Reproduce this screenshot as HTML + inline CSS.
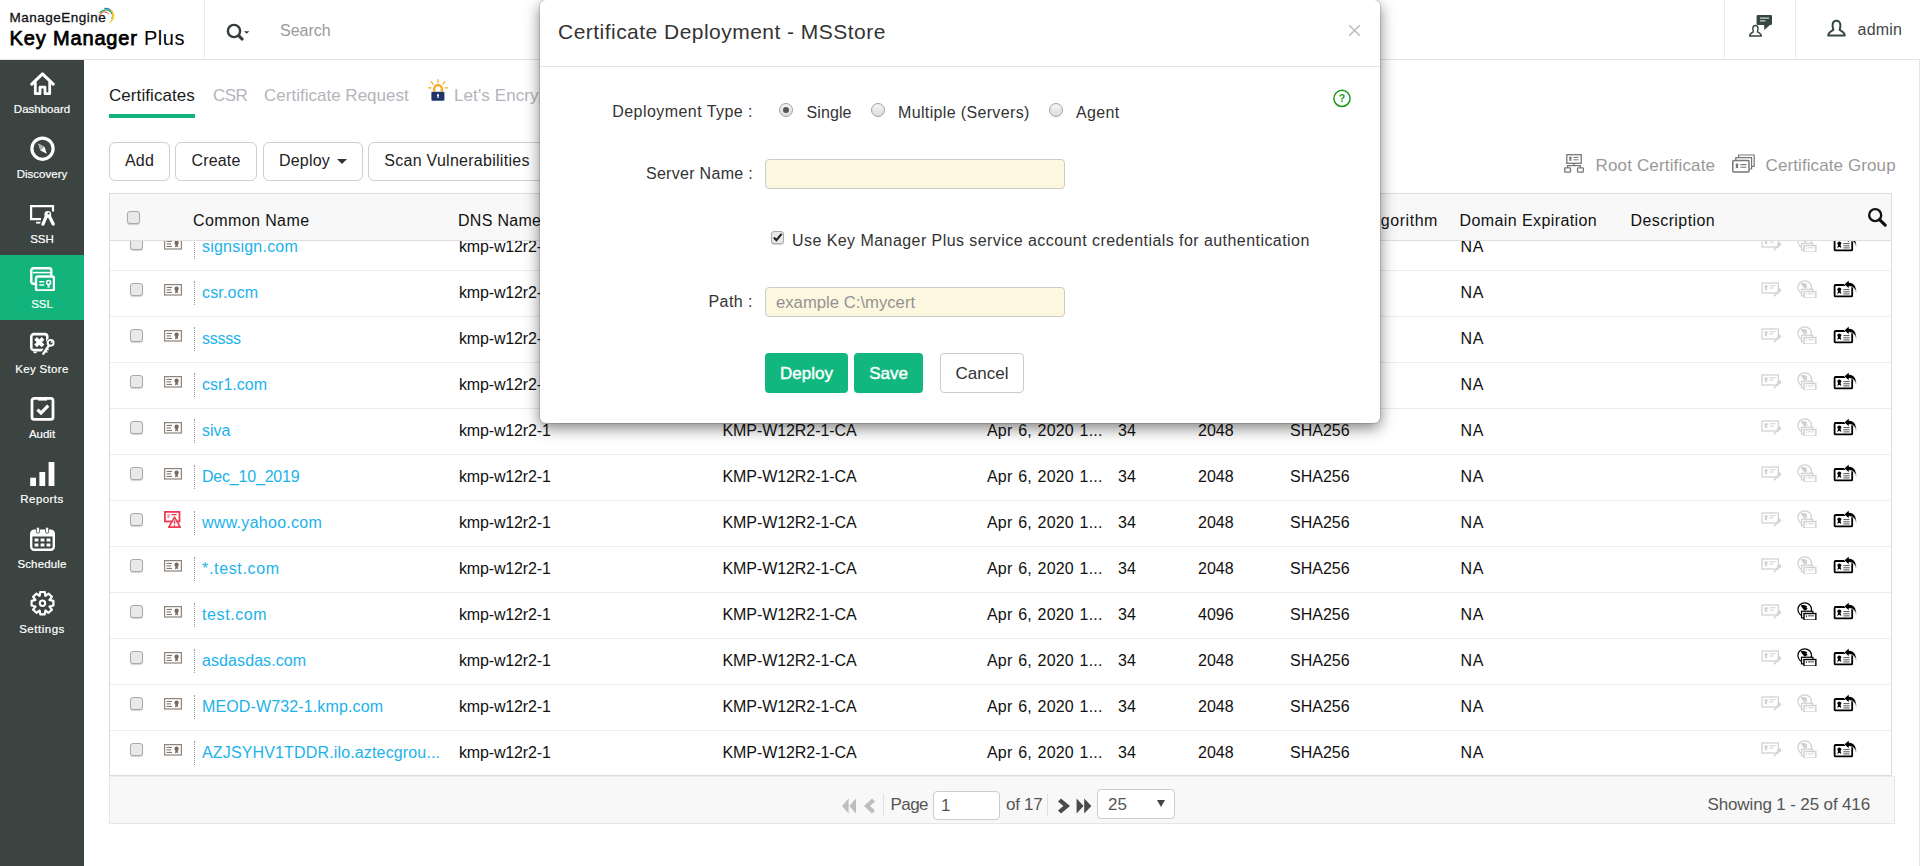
<!DOCTYPE html>
<html><head><meta charset="utf-8"><title>Key Manager Plus</title>
<style>
*{box-sizing:border-box;margin:0;padding:0}
html,body{width:1920px;height:866px;overflow:hidden;background:#fff;font-family:"Liberation Sans",Arial,sans-serif;font-size:16px;color:#111}
.abs{position:absolute;white-space:nowrap}
#hdr{position:absolute;left:0;top:0;width:1920px;height:60px;background:#fff;border-bottom:1px solid #e4e4e4}
.vdiv{position:absolute;top:0;width:1px;height:59px;background:#ececec}
#side{position:absolute;left:0;top:60px;width:84px;height:806px;background:#3b4441}
.nav{position:absolute;left:0;width:84px;height:65px;color:#fff;font-size:11.5px;text-align:center}
.nav span{position:absolute;left:0;width:84px;top:42px;line-height:15px;letter-spacing:0;-webkit-text-stroke:.2px #fff}
.nav svg{position:absolute;left:30px;top:11px;width:25px;height:25px}
.nav.on{background:#13b47c}
.tab{position:absolute;top:86px;font-size:17px;line-height:20px;color:#b4b4bb;white-space:nowrap}
.btn{position:absolute;top:142px;height:39px;border:1px solid #cfcfcf;border-radius:6px;background:#fff;font-size:16px;line-height:35px;text-align:center;color:#222;letter-spacing:.2px;white-space:nowrap}
#tbl{position:absolute;left:109px;top:193px;width:1783px;height:583px;border:1px solid #dcdcdc;background:#fff;overflow:hidden}
#th{position:absolute;left:0;top:0;width:1781px;height:47px;background:#f8f8f8;border-bottom:1px solid #dedede;z-index:2}
.h{position:absolute;top:17px;font-size:16px;line-height:20px;color:#111;white-space:nowrap;letter-spacing:.4px}
.row{position:absolute;left:0;width:1781px;height:46px;border-bottom:1px solid #ececec;background:#fff}
.row .c{position:absolute;top:12px;line-height:20px;font-size:16px;white-space:nowrap;color:#111}
.row a{position:absolute;left:92px;top:12px;line-height:20px;font-size:16px;color:#1cb2ea;white-space:nowrap;text-decoration:none;letter-spacing:.25px}
.cb{position:absolute;width:13px;height:13px;border:1px solid #a9a9a9;border-radius:3px;background:#e9e9e9;box-shadow:0 1px 1px rgba(0,0,0,.18)}
.dot{position:absolute;left:84px;top:10px;width:0;height:24px;border-left:1px dotted #999}
#ftr{position:absolute;left:109px;top:776px;width:1786px;height:48px;background:#f8f8f8;border:1px solid #e6e6e6;border-top:1px solid #ebebeb}
#modal{position:absolute;left:540px;top:0;width:840px;height:423px;background:#fff;border-radius:6px;box-shadow:0 5px 15px rgba(0,0,0,.5),0 0 0 1px rgba(0,0,0,.12);z-index:10}
#mhdr{position:absolute;left:0;top:0;width:840px;height:67px;border-bottom:1px solid #e5e5e5}
.lbl{position:absolute;font-size:16px;line-height:20px;color:#333;text-align:right;width:200px;white-space:nowrap;letter-spacing:.45px}
.inp{position:absolute;left:225px;width:300px;height:30px;border:1px solid #ccc;border-radius:4px;background:#fdf7e0}
.radio{position:absolute;width:14px;height:14px;border-radius:50%;border:1px solid #a3a3a3;background:linear-gradient(#f4f4f4,#dcdcdc)}
.mb{position:absolute;top:353px;height:40px;border-radius:4px;font-size:17px;line-height:42px;text-align:center;color:#fff;background:#12b77f;font-weight:normal;-webkit-text-stroke:.4px #fff}

.ci{position:absolute;left:54px;top:13px;width:18px;height:12px}
.ri{position:absolute;left:54px;top:10px;width:17px;height:17px}
.a1{position:absolute;left:1651px;top:11px;width:21px;height:15px}
.a2{position:absolute;left:1687px;top:8.6px;width:19.8px;height:18.9px}
.a3{position:absolute;left:1722.5px;top:8.6px;width:24px;height:18px}

.opt{font-size:16px;line-height:20px;color:#333;letter-spacing:.35px}
.radio b{position:absolute;left:3px;top:3px;width:6px;height:6px;border-radius:50%;background:#555}
</style></head><body>
<div id="hdr">
 <div class="vdiv" style="left:204px"></div>
 <div class="vdiv" style="left:1724px"></div>
 <div class="vdiv" style="left:1795px"></div>
 <div class="abs" style="left:9.5px;top:9px;font-size:13.5px;line-height:18px;color:#111;letter-spacing:.5px;-webkit-text-stroke:.3px #111">ManageEngine</div>
 <svg style="position:absolute;left:96.5px;top:6px;width:20px;height:20px" viewBox="0 0 20 20"><path d="M2.2 9.4C4 5.6 8.4 4.6 11.4 7.4" fill="none" stroke="#e5343d" stroke-width="1" stroke-linecap="round"/><path d="M3 6.6C6.4 2.6 12.4 3 14.8 7.8" fill="none" stroke="#2da84a" stroke-width="1.2" stroke-linecap="round"/><path d="M8 2.6C13.6 2 17 7 15.2 12.4" fill="none" stroke="#2f7fd0" stroke-width="1.5" stroke-linecap="round"/><path d="M12 2.4C18.6 4.6 19.6 14.6 11.4 17.4C16 13.6 16.6 7 12 2.4Z" fill="#f4c91f"/></svg>
 <div class="abs" style="left:9.5px;top:25px;font-size:20px;line-height:26px;color:#000;letter-spacing:.55px"><b style="font-weight:normal;-webkit-text-stroke:.75px #000;letter-spacing:.85px">Key Manager</b> Plus</div>
 <svg style="position:absolute;left:225px;top:22px;width:26px;height:20px" viewBox="0 0 26 20"><circle cx="9" cy="9" r="6.1" fill="none" stroke="#333c3a" stroke-width="2.4"/><path d="M13.4 13.4L18 18" stroke="#333c3a" stroke-width="3"/><path d="M19 9.2H24.4L21.7 11.8Z" fill="#333c3a"/></svg>
 <div class="abs" style="left:280px;top:21px;font-size:16px;line-height:20px;color:#9a9a9a">Search</div>
 <svg style="position:absolute;left:1748px;top:14px;width:26px;height:25px" viewBox="0 0 26 25"><rect x="8.6" y="1" width="15.4" height="10" rx="1.2" fill="#364643"/><path d="M16 10.6H22.4L16.4 16Z" fill="#364643"/><path d="M12 4.2H21M12 6.8H17.4" stroke="#cfd4d3" stroke-width="1.2"/><path d="M4.8 14.6C4.8 10.4 10 10.4 10 14.6C10 16.2 9.6 17.2 9.5 17.8C11.2 18.6 13.2 19.6 13.4 22H1.6C1.8 19.6 3.6 18.6 5.3 17.8C5.2 17.2 4.8 16.2 4.8 14.6Z" fill="#fff" stroke="#364643" stroke-width="1.4" stroke-linejoin="round"/></svg>
 <svg style="position:absolute;left:1826px;top:19px;width:21px;height:19px" viewBox="0 0 21 19"><path d="M6.6 6.2C6.6 0.2 14.4 0.2 14.4 6.2C14.4 8.6 13.8 10 13.6 10.8C16 12 18.6 13.4 18.8 16.4H2.2C2.4 13.4 5 12 7.4 10.8C7.2 10 6.6 8.6 6.6 6.2Z" fill="none" stroke="#364643" stroke-width="2" stroke-linejoin="round"/></svg>
 <div class="abs" style="left:1857.6px;top:20.3px;font-size:16px;line-height:20px;color:#3f4846;letter-spacing:.2px">admin</div>
</div>
<div style="position:absolute;left:1919px;top:59px;width:1px;height:807px;background:#e4e4e4"></div>
<div id="side">
 <div class="nav" style="top:0"><svg viewBox="0 0 25 25"><path d="M1.8 13.2 L12.5 2.8 L23.2 13.2" fill="none" stroke="#fff" stroke-width="3" stroke-linecap="round" stroke-linejoin="round"/><path d="M5.3 11.5V22.7H10V16.2H15V22.7H19.7V11.5" fill="none" stroke="#fff" stroke-width="2.8" stroke-linejoin="round" stroke-linecap="round"/></svg><span>Dashboard</span></div>
 <div class="nav" style="top:65px"><svg viewBox="0 0 25 25"><circle cx="12.5" cy="12.7" r="10.6" fill="none" stroke="#fff" stroke-width="3.2"/><path d="M8.2 7.6 L14.6 11 L16.8 17.8 L10.4 14.4Z" fill="#fff"/><path d="M8.2 7.6 L14.6 11 L10.4 14.4Z" fill="#aab0ae"/></svg><span>Discovery</span></div>
 <div class="nav" style="top:130px"><svg viewBox="0 0 25 25"><path d="M23 10.6V5.1H1.1V18.2H11" fill="none" stroke="#fff" stroke-width="2.2" stroke-linejoin="miter"/><path d="M6 21.7H11.4" stroke="#fff" stroke-width="1.8"/><path d="M16.2 15.4L12.8 23.4M19.4 15L23.4 23.2" stroke="#3b4441" stroke-width="5.6" stroke-linecap="round"/><circle cx="17.8" cy="13.4" r="4.8" fill="#3b4441"/><path d="M16.4 15.2L13 23.2M19.2 15L23.2 23" stroke="#fff" stroke-width="3.2" stroke-linecap="round"/><circle cx="17.8" cy="13.4" r="2.6" fill="#fff" stroke="#fff" stroke-width="1.6"/><circle cx="18.6" cy="12.6" r="1" fill="#3b4441"/></svg><span>SSH</span></div>
 <div class="nav on" style="top:195px"><svg viewBox="0 0 25 25"><rect x="1.3" y="2.3" width="20" height="15.5" rx="2" fill="none" stroke="#fff" stroke-width="2.4"/><path d="M3 6.6H20" stroke="#fff" stroke-width="1.6"/><rect x="6" y="10.5" width="18" height="14" rx="2" fill="#13b47c" stroke="#fff" stroke-width="2.4"/><path d="M9.3 15.7H14.2M9.3 19H14.2" stroke="#fff" stroke-width="1.5"/><circle cx="18.6" cy="16.4" r="2" fill="none" stroke="#fff" stroke-width="1.5"/><path d="M17.6 18.5V22.3L18.6 21.3L19.6 22.3V18.5Z" fill="#fff"/></svg><span>SSL</span></div>
 <div class="nav" style="top:260px"><svg viewBox="0 0 25 25"><rect x="1.3" y="3.1" width="16" height="16" rx="2.6" fill="none" stroke="#fff" stroke-width="2.6"/><path d="M5.6 7.4L13 14.8M13 7.4L5.6 14.8" stroke="#fff" stroke-width="3.8"/><path d="M3.6 21.4H6.6" stroke="#fff" stroke-width="1.6"/><path d="M19.2 14L13.4 22.6" stroke="#3b4441" stroke-width="5.2" stroke-linecap="round"/><circle cx="20.7" cy="11.8" r="4.6" fill="#3b4441"/><path d="M19 14.4L13.4 22.6" stroke="#fff" stroke-width="2.5" stroke-linecap="round"/><path d="M15.2 19.8L17.4 21.4M16.6 17.6L18.6 19" stroke="#fff" stroke-width="1.5"/><circle cx="20.7" cy="11.8" r="2.9" fill="#3b4441" stroke="#fff" stroke-width="1.9"/><circle cx="21.6" cy="10.9" r=".9" fill="#fff"/></svg><span style="letter-spacing:.32px">Key Store</span></div>
 <div class="nav" style="top:325px"><svg viewBox="0 0 25 25"><rect x="2" y="2.4" width="21" height="21" rx="2.2" fill="none" stroke="#fff" stroke-width="2.8"/><path d="M8 2.4H17V4.6H8Z" fill="#fff"/><path d="M7.4 13.6L11 17L18.2 9.6" fill="none" stroke="#fff" stroke-width="3.2"/></svg><span>Audit</span></div>
 <div class="nav" style="top:390px"><svg viewBox="0 0 25 25"><rect x="0.2" y="16.7" width="5.8" height="8.3" fill="#fff"/><rect x="9.4" y="11" width="5.8" height="14" fill="#fff"/><rect x="18.6" y="1" width="5.8" height="24" fill="#fff"/></svg><span style="letter-spacing:.45px">Reports</span></div>
 <div class="nav" style="top:455px"><svg viewBox="0 0 25 25"><rect x="1.2" y="4.8" width="22.6" height="19" rx="3" fill="none" stroke="#fff" stroke-width="2.4"/><path d="M1.2 8.5Q1.2 4.8 5 4.8H20Q23.8 4.8 23.8 8.5V10.5H1.2Z" fill="#fff"/><rect x="6.4" y="1.2" width="3" height="6" rx="1.2" fill="#fff" stroke="#3b4441" stroke-width=".8"/><rect x="15.6" y="1.2" width="3" height="6" rx="1.2" fill="#fff" stroke="#3b4441" stroke-width=".8"/><path d="M4.6 12.6H8.4V15.6H4.6ZM10.6 12.6H14.4V15.6H10.6ZM16.6 12.6H20.4V15.6H16.6ZM4.6 17.6H8.4V20.6H4.6ZM10.6 17.6H14.4V20.6H10.6ZM16.6 17.6H20.4V20.6H16.6Z" fill="#fff"/></svg><span style="letter-spacing:.16px">Schedule</span></div>
 <div class="nav" style="top:520px"><svg viewBox="0 0 25 25"><g transform="translate(12.5 12.2)"><path d="M-2.2 -11.2H2.2L2.9 -7.3L6 -9.6L9.4 -6.4L7 -3.3L10.9 -2.3V2.3L7 3.3L9.4 6.4L6 9.6L2.9 7.3L2.2 11.2H-2.2L-2.9 7.3L-6 9.6L-9.4 6.4L-7 3.3L-10.9 2.3V-2.3L-7 -3.3L-9.4 -6.4L-6 -9.6L-2.9 -7.3Z" fill="none" stroke="#fff" stroke-width="2.2" stroke-linejoin="round"/><circle r="2.7" fill="none" stroke="#fff" stroke-width="2"/></g></svg><span style="letter-spacing:.52px">Settings</span></div>
</div>

<div id="main">
<div class="tab" style="left:109px;color:#1a1a1a;letter-spacing:.07px">Certificates</div>
<div style="position:absolute;left:109px;top:114px;width:86px;height:4px;background:#13b47c"></div>
<div class="tab" style="left:213px;letter-spacing:-.5px">CSR</div>
<div class="tab" style="left:264px;letter-spacing:.01px">Certificate Request</div>
<svg style="position:absolute;left:428px;top:79px;width:20px;height:24px" viewBox="0 0 20 24"><rect x="3.4" y="12.8" width="13" height="9" rx="1" fill="#1f3468"/><path d="M6.2 12.8V10A3.8 3.8 0 0 1 13.8 10V12.8" fill="none" stroke="#f6a623" stroke-width="2.3"/><path d="M10 0.6V3.8M3.2 2.8L5 5.2M16.8 2.8L15 5.2M0.4 8.8H3M17 8.8H19.6" stroke="#f6a623" stroke-width="1.2" stroke-linecap="round"/><circle cx="10" cy="16.2" r="1.1" fill="#fff"/><rect x="9.4" y="16.4" width="1.2" height="2.6" fill="#fff"/></svg>
<div class="tab" style="left:454px;letter-spacing:.1px">Let's Encrypt</div>
<div class="btn" style="left:109px;width:61px">Add</div>
<div class="btn" style="left:175px;width:82px">Create</div>
<div class="btn" style="left:263px;width:100px;text-align:left;padding-left:15px">Deploy<i style="position:absolute;left:73px;top:16px;border:5px solid transparent;border-top:5px solid #333;border-bottom:none"></i></div>
<div class="btn" style="left:368px;width:178px;letter-spacing:.27px">Scan Vulnerabilities</div>
<svg style="position:absolute;left:1564px;top:154px;width:20px;height:19px" viewBox="0 0 20 19"><rect x="2.8" y=".7" width="14.4" height="8.6" fill="none" stroke="#777" stroke-width="1.3"/><circle cx="6.4" cy="3.8" r="1.3" fill="#777"/><path d="M5.6 4.6L5.2 7L6.4 6.4L7.6 7L7.2 4.6Z" fill="#777"/><path d="M9.4 3.4H14.6M9.4 5.8H14.6" stroke="#777" stroke-width="1"/><path d="M10 9.3V11.6M3.6 14V11.6H16.4V14" fill="none" stroke="#777" stroke-width="1.3"/><rect x=".7" y="13.8" width="5.8" height="4.4" rx=".8" fill="none" stroke="#777" stroke-width="1.3"/><rect x="13.5" y="13.8" width="5.8" height="4.4" rx=".8" fill="none" stroke="#777" stroke-width="1.3"/></svg>
<div class="abs" style="left:1595.5px;top:156.3px;font-size:17px;line-height:20px;color:#999;letter-spacing:.16px">Root Certificate</div>
<svg style="position:absolute;left:1732px;top:154px;width:23px;height:19px" viewBox="0 0 23 19"><path d="M6.6 3.4V1H22.2V12.4H20" fill="none" stroke="#777" stroke-width="1.2"/><path d="M3.8 6V3.6H19.6V15H17.4" fill="none" stroke="#777" stroke-width="1.2"/><rect x=".8" y="6.4" width="16.2" height="11.6" rx="1" fill="#fff" stroke="#777" stroke-width="1.5"/><circle cx="5" cy="10.8" r="1.4" fill="#777"/><path d="M4.1 11.8L3.6 14.6L5 13.8L6.4 14.6L5.9 11.8Z" fill="#777"/><path d="M8.4 10.6H14.4M8.4 13.2H14.4" stroke="#777" stroke-width="1.1"/></svg>
<div class="abs" style="left:1765.5px;top:156.3px;font-size:17px;line-height:20px;color:#999;letter-spacing:.1px">Certificate Group</div>
<div id="tbl">
<div class="row" style="top:31px"><i class="cb" style="left:20px;top:12px"></i><svg class="ci" viewBox="0 0 18 12"><rect x=".6" y=".6" width="16.8" height="10.4" fill="#fff" stroke="#8d8378" stroke-width="1.2"/><path d="M2.6 3.4H8M2.6 5.9H7M2.6 8.4H8" stroke="#6f6a66" stroke-width="1"/><circle cx="12.6" cy="4.7" r="2.2" fill="#7a6a5c"/><path d="M11.5 6.2L11 9.4L12.6 8.6L14.2 9.4L13.7 6.2Z" fill="#7a6a5c"/></svg><i class="dot"></i><a style="letter-spacing:0.22px">signsign.com</a><span class="c" style="left:349px;letter-spacing:-.15px">kmp-w12r2-1</span><span class="c" style="left:612.5px;letter-spacing:-.08px">KMP-W12R2-1-CA</span><span class="c" style="left:877px;letter-spacing:.2px;word-spacing:1px">Apr 6, 2020 1...</span><span class="c" style="left:1008px">34</span><span class="c" style="left:1088px">2048</span><span class="c" style="left:1180px">SHA256</span><span class="c" style="left:1350.5px;letter-spacing:.7px">NA</span><svg class="a1" viewBox="0 0 21 15"><rect x="1" y="1" width="16.4" height="10" fill="none" stroke="#d3d3d3" stroke-width="1.3"/><circle cx="5" cy="4.6" r="1.7" fill="#d3d3d3"/><path d="M4 5.8L3.6 8.6L5 7.8L6.4 8.6L6 5.8Z" fill="#d3d3d3"/><path d="M8.6 3.8H14.6M8.6 6H12.6" stroke="#d3d3d3" stroke-width="1.1"/><circle cx="18.2" cy="8.2" r="1.9" fill="#d3d3d3"/><path d="M17.4 9.2L13.4 13.8" stroke="#d3d3d3" stroke-width="1.6" stroke-linecap="round"/></svg><svg class="a2" viewBox="0 0 21 20"><circle cx="8.2" cy="8" r="7.2" fill="none" stroke="#d0d0d0" stroke-width="1.3"/><path d="M4 3.6C6 3 8.4 3.2 10.8 4.4L10 6.4L11.6 7.2L8.2 9.2L5.6 6.4Z" fill="#d0d0d0"/><rect x="4.8" y="9.8" width="12" height="7" fill="#fff" stroke="#d0d0d0" stroke-width="1.3"/><rect x="7.4" y="12.2" width="12.6" height="7" fill="#fff" stroke="#d0d0d0" stroke-width="1.5"/><path d="M9.4 15H10.6" stroke="#d0d0d0" stroke-width="1.3"/><path d="M11.6 14.6H18" stroke="#e4e4e4" stroke-width="1.6"/></svg><svg class="a3" viewBox="0 0 24 18"><rect x="1.6" y="5" width="17.6" height="11.4" rx="1" fill="#fff" stroke="#000" stroke-width="1.8"/><circle cx="6.3" cy="9.3" r="1.9" fill="#000"/><path d="M5.2 10.4L4.2 14L6.3 12.8L8.4 14L7.4 10.4Z" fill="#000"/><path d="M10.4 9.6H16.6M10.4 11.8H16.6M10.4 13.9H16.6" stroke="#555" stroke-width="1"/><path d="M11.2 4.3L16 0V2.4C20.8 2.4 23.8 6 23.4 13.4C22.2 8.8 20.4 6.4 16 6.4V8.8Z" fill="#000" stroke="#fff" stroke-width=".7"/></svg></div>
<div class="row" style="top:77px"><i class="cb" style="left:20px;top:12px"></i><svg class="ci" viewBox="0 0 18 12"><rect x=".6" y=".6" width="16.8" height="10.4" fill="#fff" stroke="#8d8378" stroke-width="1.2"/><path d="M2.6 3.4H8M2.6 5.9H7M2.6 8.4H8" stroke="#6f6a66" stroke-width="1"/><circle cx="12.6" cy="4.7" r="2.2" fill="#7a6a5c"/><path d="M11.5 6.2L11 9.4L12.6 8.6L14.2 9.4L13.7 6.2Z" fill="#7a6a5c"/></svg><i class="dot"></i><a style="letter-spacing:0.17px">csr.ocm</a><span class="c" style="left:349px;letter-spacing:-.15px">kmp-w12r2-1</span><span class="c" style="left:612.5px;letter-spacing:-.08px">KMP-W12R2-1-CA</span><span class="c" style="left:877px;letter-spacing:.2px;word-spacing:1px">Apr 6, 2020 1...</span><span class="c" style="left:1008px">34</span><span class="c" style="left:1088px">2048</span><span class="c" style="left:1180px">SHA256</span><span class="c" style="left:1350.5px;letter-spacing:.7px">NA</span><svg class="a1" viewBox="0 0 21 15"><rect x="1" y="1" width="16.4" height="10" fill="none" stroke="#d3d3d3" stroke-width="1.3"/><circle cx="5" cy="4.6" r="1.7" fill="#d3d3d3"/><path d="M4 5.8L3.6 8.6L5 7.8L6.4 8.6L6 5.8Z" fill="#d3d3d3"/><path d="M8.6 3.8H14.6M8.6 6H12.6" stroke="#d3d3d3" stroke-width="1.1"/><circle cx="18.2" cy="8.2" r="1.9" fill="#d3d3d3"/><path d="M17.4 9.2L13.4 13.8" stroke="#d3d3d3" stroke-width="1.6" stroke-linecap="round"/></svg><svg class="a2" viewBox="0 0 21 20"><circle cx="8.2" cy="8" r="7.2" fill="none" stroke="#d0d0d0" stroke-width="1.3"/><path d="M4 3.6C6 3 8.4 3.2 10.8 4.4L10 6.4L11.6 7.2L8.2 9.2L5.6 6.4Z" fill="#d0d0d0"/><rect x="4.8" y="9.8" width="12" height="7" fill="#fff" stroke="#d0d0d0" stroke-width="1.3"/><rect x="7.4" y="12.2" width="12.6" height="7" fill="#fff" stroke="#d0d0d0" stroke-width="1.5"/><path d="M9.4 15H10.6" stroke="#d0d0d0" stroke-width="1.3"/><path d="M11.6 14.6H18" stroke="#e4e4e4" stroke-width="1.6"/></svg><svg class="a3" viewBox="0 0 24 18"><rect x="1.6" y="5" width="17.6" height="11.4" rx="1" fill="#fff" stroke="#000" stroke-width="1.8"/><circle cx="6.3" cy="9.3" r="1.9" fill="#000"/><path d="M5.2 10.4L4.2 14L6.3 12.8L8.4 14L7.4 10.4Z" fill="#000"/><path d="M10.4 9.6H16.6M10.4 11.8H16.6M10.4 13.9H16.6" stroke="#555" stroke-width="1"/><path d="M11.2 4.3L16 0V2.4C20.8 2.4 23.8 6 23.4 13.4C22.2 8.8 20.4 6.4 16 6.4V8.8Z" fill="#000" stroke="#fff" stroke-width=".7"/></svg></div>
<div class="row" style="top:123px"><i class="cb" style="left:20px;top:12px"></i><svg class="ci" viewBox="0 0 18 12"><rect x=".6" y=".6" width="16.8" height="10.4" fill="#fff" stroke="#8d8378" stroke-width="1.2"/><path d="M2.6 3.4H8M2.6 5.9H7M2.6 8.4H8" stroke="#6f6a66" stroke-width="1"/><circle cx="12.6" cy="4.7" r="2.2" fill="#7a6a5c"/><path d="M11.5 6.2L11 9.4L12.6 8.6L14.2 9.4L13.7 6.2Z" fill="#7a6a5c"/></svg><i class="dot"></i><a style="letter-spacing:-0.24px">sssss</a><span class="c" style="left:349px;letter-spacing:-.15px">kmp-w12r2-1</span><span class="c" style="left:612.5px;letter-spacing:-.08px">KMP-W12R2-1-CA</span><span class="c" style="left:877px;letter-spacing:.2px;word-spacing:1px">Apr 6, 2020 1...</span><span class="c" style="left:1008px">34</span><span class="c" style="left:1088px">2048</span><span class="c" style="left:1180px">SHA256</span><span class="c" style="left:1350.5px;letter-spacing:.7px">NA</span><svg class="a1" viewBox="0 0 21 15"><rect x="1" y="1" width="16.4" height="10" fill="none" stroke="#d3d3d3" stroke-width="1.3"/><circle cx="5" cy="4.6" r="1.7" fill="#d3d3d3"/><path d="M4 5.8L3.6 8.6L5 7.8L6.4 8.6L6 5.8Z" fill="#d3d3d3"/><path d="M8.6 3.8H14.6M8.6 6H12.6" stroke="#d3d3d3" stroke-width="1.1"/><circle cx="18.2" cy="8.2" r="1.9" fill="#d3d3d3"/><path d="M17.4 9.2L13.4 13.8" stroke="#d3d3d3" stroke-width="1.6" stroke-linecap="round"/></svg><svg class="a2" viewBox="0 0 21 20"><circle cx="8.2" cy="8" r="7.2" fill="none" stroke="#d0d0d0" stroke-width="1.3"/><path d="M4 3.6C6 3 8.4 3.2 10.8 4.4L10 6.4L11.6 7.2L8.2 9.2L5.6 6.4Z" fill="#d0d0d0"/><rect x="4.8" y="9.8" width="12" height="7" fill="#fff" stroke="#d0d0d0" stroke-width="1.3"/><rect x="7.4" y="12.2" width="12.6" height="7" fill="#fff" stroke="#d0d0d0" stroke-width="1.5"/><path d="M9.4 15H10.6" stroke="#d0d0d0" stroke-width="1.3"/><path d="M11.6 14.6H18" stroke="#e4e4e4" stroke-width="1.6"/></svg><svg class="a3" viewBox="0 0 24 18"><rect x="1.6" y="5" width="17.6" height="11.4" rx="1" fill="#fff" stroke="#000" stroke-width="1.8"/><circle cx="6.3" cy="9.3" r="1.9" fill="#000"/><path d="M5.2 10.4L4.2 14L6.3 12.8L8.4 14L7.4 10.4Z" fill="#000"/><path d="M10.4 9.6H16.6M10.4 11.8H16.6M10.4 13.9H16.6" stroke="#555" stroke-width="1"/><path d="M11.2 4.3L16 0V2.4C20.8 2.4 23.8 6 23.4 13.4C22.2 8.8 20.4 6.4 16 6.4V8.8Z" fill="#000" stroke="#fff" stroke-width=".7"/></svg></div>
<div class="row" style="top:169px"><i class="cb" style="left:20px;top:12px"></i><svg class="ci" viewBox="0 0 18 12"><rect x=".6" y=".6" width="16.8" height="10.4" fill="#fff" stroke="#8d8378" stroke-width="1.2"/><path d="M2.6 3.4H8M2.6 5.9H7M2.6 8.4H8" stroke="#6f6a66" stroke-width="1"/><circle cx="12.6" cy="4.7" r="2.2" fill="#7a6a5c"/><path d="M11.5 6.2L11 9.4L12.6 8.6L14.2 9.4L13.7 6.2Z" fill="#7a6a5c"/></svg><i class="dot"></i><a style="letter-spacing:0.02px">csr1.com</a><span class="c" style="left:349px;letter-spacing:-.15px">kmp-w12r2-1</span><span class="c" style="left:612.5px;letter-spacing:-.08px">KMP-W12R2-1-CA</span><span class="c" style="left:877px;letter-spacing:.2px;word-spacing:1px">Apr 6, 2020 1...</span><span class="c" style="left:1008px">34</span><span class="c" style="left:1088px">2048</span><span class="c" style="left:1180px">SHA256</span><span class="c" style="left:1350.5px;letter-spacing:.7px">NA</span><svg class="a1" viewBox="0 0 21 15"><rect x="1" y="1" width="16.4" height="10" fill="none" stroke="#d3d3d3" stroke-width="1.3"/><circle cx="5" cy="4.6" r="1.7" fill="#d3d3d3"/><path d="M4 5.8L3.6 8.6L5 7.8L6.4 8.6L6 5.8Z" fill="#d3d3d3"/><path d="M8.6 3.8H14.6M8.6 6H12.6" stroke="#d3d3d3" stroke-width="1.1"/><circle cx="18.2" cy="8.2" r="1.9" fill="#d3d3d3"/><path d="M17.4 9.2L13.4 13.8" stroke="#d3d3d3" stroke-width="1.6" stroke-linecap="round"/></svg><svg class="a2" viewBox="0 0 21 20"><circle cx="8.2" cy="8" r="7.2" fill="none" stroke="#d0d0d0" stroke-width="1.3"/><path d="M4 3.6C6 3 8.4 3.2 10.8 4.4L10 6.4L11.6 7.2L8.2 9.2L5.6 6.4Z" fill="#d0d0d0"/><rect x="4.8" y="9.8" width="12" height="7" fill="#fff" stroke="#d0d0d0" stroke-width="1.3"/><rect x="7.4" y="12.2" width="12.6" height="7" fill="#fff" stroke="#d0d0d0" stroke-width="1.5"/><path d="M9.4 15H10.6" stroke="#d0d0d0" stroke-width="1.3"/><path d="M11.6 14.6H18" stroke="#e4e4e4" stroke-width="1.6"/></svg><svg class="a3" viewBox="0 0 24 18"><rect x="1.6" y="5" width="17.6" height="11.4" rx="1" fill="#fff" stroke="#000" stroke-width="1.8"/><circle cx="6.3" cy="9.3" r="1.9" fill="#000"/><path d="M5.2 10.4L4.2 14L6.3 12.8L8.4 14L7.4 10.4Z" fill="#000"/><path d="M10.4 9.6H16.6M10.4 11.8H16.6M10.4 13.9H16.6" stroke="#555" stroke-width="1"/><path d="M11.2 4.3L16 0V2.4C20.8 2.4 23.8 6 23.4 13.4C22.2 8.8 20.4 6.4 16 6.4V8.8Z" fill="#000" stroke="#fff" stroke-width=".7"/></svg></div>
<div class="row" style="top:215px"><i class="cb" style="left:20px;top:12px"></i><svg class="ci" viewBox="0 0 18 12"><rect x=".6" y=".6" width="16.8" height="10.4" fill="#fff" stroke="#8d8378" stroke-width="1.2"/><path d="M2.6 3.4H8M2.6 5.9H7M2.6 8.4H8" stroke="#6f6a66" stroke-width="1"/><circle cx="12.6" cy="4.7" r="2.2" fill="#7a6a5c"/><path d="M11.5 6.2L11 9.4L12.6 8.6L14.2 9.4L13.7 6.2Z" fill="#7a6a5c"/></svg><i class="dot"></i><a style="letter-spacing:-0.04px">siva</a><span class="c" style="left:349px;letter-spacing:-.15px">kmp-w12r2-1</span><span class="c" style="left:612.5px;letter-spacing:-.08px">KMP-W12R2-1-CA</span><span class="c" style="left:877px;letter-spacing:.2px;word-spacing:1px">Apr 6, 2020 1...</span><span class="c" style="left:1008px">34</span><span class="c" style="left:1088px">2048</span><span class="c" style="left:1180px">SHA256</span><span class="c" style="left:1350.5px;letter-spacing:.7px">NA</span><svg class="a1" viewBox="0 0 21 15"><rect x="1" y="1" width="16.4" height="10" fill="none" stroke="#d3d3d3" stroke-width="1.3"/><circle cx="5" cy="4.6" r="1.7" fill="#d3d3d3"/><path d="M4 5.8L3.6 8.6L5 7.8L6.4 8.6L6 5.8Z" fill="#d3d3d3"/><path d="M8.6 3.8H14.6M8.6 6H12.6" stroke="#d3d3d3" stroke-width="1.1"/><circle cx="18.2" cy="8.2" r="1.9" fill="#d3d3d3"/><path d="M17.4 9.2L13.4 13.8" stroke="#d3d3d3" stroke-width="1.6" stroke-linecap="round"/></svg><svg class="a2" viewBox="0 0 21 20"><circle cx="8.2" cy="8" r="7.2" fill="none" stroke="#d0d0d0" stroke-width="1.3"/><path d="M4 3.6C6 3 8.4 3.2 10.8 4.4L10 6.4L11.6 7.2L8.2 9.2L5.6 6.4Z" fill="#d0d0d0"/><rect x="4.8" y="9.8" width="12" height="7" fill="#fff" stroke="#d0d0d0" stroke-width="1.3"/><rect x="7.4" y="12.2" width="12.6" height="7" fill="#fff" stroke="#d0d0d0" stroke-width="1.5"/><path d="M9.4 15H10.6" stroke="#d0d0d0" stroke-width="1.3"/><path d="M11.6 14.6H18" stroke="#e4e4e4" stroke-width="1.6"/></svg><svg class="a3" viewBox="0 0 24 18"><rect x="1.6" y="5" width="17.6" height="11.4" rx="1" fill="#fff" stroke="#000" stroke-width="1.8"/><circle cx="6.3" cy="9.3" r="1.9" fill="#000"/><path d="M5.2 10.4L4.2 14L6.3 12.8L8.4 14L7.4 10.4Z" fill="#000"/><path d="M10.4 9.6H16.6M10.4 11.8H16.6M10.4 13.9H16.6" stroke="#555" stroke-width="1"/><path d="M11.2 4.3L16 0V2.4C20.8 2.4 23.8 6 23.4 13.4C22.2 8.8 20.4 6.4 16 6.4V8.8Z" fill="#000" stroke="#fff" stroke-width=".7"/></svg></div>
<div class="row" style="top:261px"><i class="cb" style="left:20px;top:12px"></i><svg class="ci" viewBox="0 0 18 12"><rect x=".6" y=".6" width="16.8" height="10.4" fill="#fff" stroke="#8d8378" stroke-width="1.2"/><path d="M2.6 3.4H8M2.6 5.9H7M2.6 8.4H8" stroke="#6f6a66" stroke-width="1"/><circle cx="12.6" cy="4.7" r="2.2" fill="#7a6a5c"/><path d="M11.5 6.2L11 9.4L12.6 8.6L14.2 9.4L13.7 6.2Z" fill="#7a6a5c"/></svg><i class="dot"></i><a style="letter-spacing:-0.2px">Dec_10_2019</a><span class="c" style="left:349px;letter-spacing:-.15px">kmp-w12r2-1</span><span class="c" style="left:612.5px;letter-spacing:-.08px">KMP-W12R2-1-CA</span><span class="c" style="left:877px;letter-spacing:.2px;word-spacing:1px">Apr 6, 2020 1...</span><span class="c" style="left:1008px">34</span><span class="c" style="left:1088px">2048</span><span class="c" style="left:1180px">SHA256</span><span class="c" style="left:1350.5px;letter-spacing:.7px">NA</span><svg class="a1" viewBox="0 0 21 15"><rect x="1" y="1" width="16.4" height="10" fill="none" stroke="#d3d3d3" stroke-width="1.3"/><circle cx="5" cy="4.6" r="1.7" fill="#d3d3d3"/><path d="M4 5.8L3.6 8.6L5 7.8L6.4 8.6L6 5.8Z" fill="#d3d3d3"/><path d="M8.6 3.8H14.6M8.6 6H12.6" stroke="#d3d3d3" stroke-width="1.1"/><circle cx="18.2" cy="8.2" r="1.9" fill="#d3d3d3"/><path d="M17.4 9.2L13.4 13.8" stroke="#d3d3d3" stroke-width="1.6" stroke-linecap="round"/></svg><svg class="a2" viewBox="0 0 21 20"><circle cx="8.2" cy="8" r="7.2" fill="none" stroke="#d0d0d0" stroke-width="1.3"/><path d="M4 3.6C6 3 8.4 3.2 10.8 4.4L10 6.4L11.6 7.2L8.2 9.2L5.6 6.4Z" fill="#d0d0d0"/><rect x="4.8" y="9.8" width="12" height="7" fill="#fff" stroke="#d0d0d0" stroke-width="1.3"/><rect x="7.4" y="12.2" width="12.6" height="7" fill="#fff" stroke="#d0d0d0" stroke-width="1.5"/><path d="M9.4 15H10.6" stroke="#d0d0d0" stroke-width="1.3"/><path d="M11.6 14.6H18" stroke="#e4e4e4" stroke-width="1.6"/></svg><svg class="a3" viewBox="0 0 24 18"><rect x="1.6" y="5" width="17.6" height="11.4" rx="1" fill="#fff" stroke="#000" stroke-width="1.8"/><circle cx="6.3" cy="9.3" r="1.9" fill="#000"/><path d="M5.2 10.4L4.2 14L6.3 12.8L8.4 14L7.4 10.4Z" fill="#000"/><path d="M10.4 9.6H16.6M10.4 11.8H16.6M10.4 13.9H16.6" stroke="#555" stroke-width="1"/><path d="M11.2 4.3L16 0V2.4C20.8 2.4 23.8 6 23.4 13.4C22.2 8.8 20.4 6.4 16 6.4V8.8Z" fill="#000" stroke="#fff" stroke-width=".7"/></svg></div>
<div class="row" style="top:307px"><i class="cb" style="left:20px;top:12px"></i><svg class="ri" viewBox="0 0 17 17"><rect x=".9" y=".9" width="14.6" height="9.6" fill="none" stroke="#ee3a52" stroke-width="1.8"/><path d="M3.4 4H5.6M3.4 6H5.6M7.5 3.6H12.6" stroke="#ee3a52" stroke-width="1.1"/><path d="M10.5 6.2L16.2 16.2H4.8Z" fill="#fff" stroke="#ee3a52" stroke-width="1.7" stroke-linejoin="round"/><path d="M10.5 9.6V12.8M10.5 13.8V15" stroke="#ee3a52" stroke-width="1.5"/></svg><i class="dot"></i><a style="letter-spacing:0.28px">www.yahoo.com</a><span class="c" style="left:349px;letter-spacing:-.15px">kmp-w12r2-1</span><span class="c" style="left:612.5px;letter-spacing:-.08px">KMP-W12R2-1-CA</span><span class="c" style="left:877px;letter-spacing:.2px;word-spacing:1px">Apr 6, 2020 1...</span><span class="c" style="left:1008px">34</span><span class="c" style="left:1088px">2048</span><span class="c" style="left:1180px">SHA256</span><span class="c" style="left:1350.5px;letter-spacing:.7px">NA</span><svg class="a1" viewBox="0 0 21 15"><rect x="1" y="1" width="16.4" height="10" fill="none" stroke="#d3d3d3" stroke-width="1.3"/><circle cx="5" cy="4.6" r="1.7" fill="#d3d3d3"/><path d="M4 5.8L3.6 8.6L5 7.8L6.4 8.6L6 5.8Z" fill="#d3d3d3"/><path d="M8.6 3.8H14.6M8.6 6H12.6" stroke="#d3d3d3" stroke-width="1.1"/><circle cx="18.2" cy="8.2" r="1.9" fill="#d3d3d3"/><path d="M17.4 9.2L13.4 13.8" stroke="#d3d3d3" stroke-width="1.6" stroke-linecap="round"/></svg><svg class="a2" viewBox="0 0 21 20"><circle cx="8.2" cy="8" r="7.2" fill="none" stroke="#d0d0d0" stroke-width="1.3"/><path d="M4 3.6C6 3 8.4 3.2 10.8 4.4L10 6.4L11.6 7.2L8.2 9.2L5.6 6.4Z" fill="#d0d0d0"/><rect x="4.8" y="9.8" width="12" height="7" fill="#fff" stroke="#d0d0d0" stroke-width="1.3"/><rect x="7.4" y="12.2" width="12.6" height="7" fill="#fff" stroke="#d0d0d0" stroke-width="1.5"/><path d="M9.4 15H10.6" stroke="#d0d0d0" stroke-width="1.3"/><path d="M11.6 14.6H18" stroke="#e4e4e4" stroke-width="1.6"/></svg><svg class="a3" viewBox="0 0 24 18"><rect x="1.6" y="5" width="17.6" height="11.4" rx="1" fill="#fff" stroke="#000" stroke-width="1.8"/><circle cx="6.3" cy="9.3" r="1.9" fill="#000"/><path d="M5.2 10.4L4.2 14L6.3 12.8L8.4 14L7.4 10.4Z" fill="#000"/><path d="M10.4 9.6H16.6M10.4 11.8H16.6M10.4 13.9H16.6" stroke="#555" stroke-width="1"/><path d="M11.2 4.3L16 0V2.4C20.8 2.4 23.8 6 23.4 13.4C22.2 8.8 20.4 6.4 16 6.4V8.8Z" fill="#000" stroke="#fff" stroke-width=".7"/></svg></div>
<div class="row" style="top:353px"><i class="cb" style="left:20px;top:12px"></i><svg class="ci" viewBox="0 0 18 12"><rect x=".6" y=".6" width="16.8" height="10.4" fill="#fff" stroke="#8d8378" stroke-width="1.2"/><path d="M2.6 3.4H8M2.6 5.9H7M2.6 8.4H8" stroke="#6f6a66" stroke-width="1"/><circle cx="12.6" cy="4.7" r="2.2" fill="#7a6a5c"/><path d="M11.5 6.2L11 9.4L12.6 8.6L14.2 9.4L13.7 6.2Z" fill="#7a6a5c"/></svg><i class="dot"></i><a style="letter-spacing:0.67px">*.test.com</a><span class="c" style="left:349px;letter-spacing:-.15px">kmp-w12r2-1</span><span class="c" style="left:612.5px;letter-spacing:-.08px">KMP-W12R2-1-CA</span><span class="c" style="left:877px;letter-spacing:.2px;word-spacing:1px">Apr 6, 2020 1...</span><span class="c" style="left:1008px">34</span><span class="c" style="left:1088px">2048</span><span class="c" style="left:1180px">SHA256</span><span class="c" style="left:1350.5px;letter-spacing:.7px">NA</span><svg class="a1" viewBox="0 0 21 15"><rect x="1" y="1" width="16.4" height="10" fill="none" stroke="#d3d3d3" stroke-width="1.3"/><circle cx="5" cy="4.6" r="1.7" fill="#d3d3d3"/><path d="M4 5.8L3.6 8.6L5 7.8L6.4 8.6L6 5.8Z" fill="#d3d3d3"/><path d="M8.6 3.8H14.6M8.6 6H12.6" stroke="#d3d3d3" stroke-width="1.1"/><circle cx="18.2" cy="8.2" r="1.9" fill="#d3d3d3"/><path d="M17.4 9.2L13.4 13.8" stroke="#d3d3d3" stroke-width="1.6" stroke-linecap="round"/></svg><svg class="a2" viewBox="0 0 21 20"><circle cx="8.2" cy="8" r="7.2" fill="none" stroke="#d0d0d0" stroke-width="1.3"/><path d="M4 3.6C6 3 8.4 3.2 10.8 4.4L10 6.4L11.6 7.2L8.2 9.2L5.6 6.4Z" fill="#d0d0d0"/><rect x="4.8" y="9.8" width="12" height="7" fill="#fff" stroke="#d0d0d0" stroke-width="1.3"/><rect x="7.4" y="12.2" width="12.6" height="7" fill="#fff" stroke="#d0d0d0" stroke-width="1.5"/><path d="M9.4 15H10.6" stroke="#d0d0d0" stroke-width="1.3"/><path d="M11.6 14.6H18" stroke="#e4e4e4" stroke-width="1.6"/></svg><svg class="a3" viewBox="0 0 24 18"><rect x="1.6" y="5" width="17.6" height="11.4" rx="1" fill="#fff" stroke="#000" stroke-width="1.8"/><circle cx="6.3" cy="9.3" r="1.9" fill="#000"/><path d="M5.2 10.4L4.2 14L6.3 12.8L8.4 14L7.4 10.4Z" fill="#000"/><path d="M10.4 9.6H16.6M10.4 11.8H16.6M10.4 13.9H16.6" stroke="#555" stroke-width="1"/><path d="M11.2 4.3L16 0V2.4C20.8 2.4 23.8 6 23.4 13.4C22.2 8.8 20.4 6.4 16 6.4V8.8Z" fill="#000" stroke="#fff" stroke-width=".7"/></svg></div>
<div class="row" style="top:399px"><i class="cb" style="left:20px;top:12px"></i><svg class="ci" viewBox="0 0 18 12"><rect x=".6" y=".6" width="16.8" height="10.4" fill="#fff" stroke="#8d8378" stroke-width="1.2"/><path d="M2.6 3.4H8M2.6 5.9H7M2.6 8.4H8" stroke="#6f6a66" stroke-width="1"/><circle cx="12.6" cy="4.7" r="2.2" fill="#7a6a5c"/><path d="M11.5 6.2L11 9.4L12.6 8.6L14.2 9.4L13.7 6.2Z" fill="#7a6a5c"/></svg><i class="dot"></i><a style="letter-spacing:0.6px">test.com</a><span class="c" style="left:349px;letter-spacing:-.15px">kmp-w12r2-1</span><span class="c" style="left:612.5px;letter-spacing:-.08px">KMP-W12R2-1-CA</span><span class="c" style="left:877px;letter-spacing:.2px;word-spacing:1px">Apr 6, 2020 1...</span><span class="c" style="left:1008px">34</span><span class="c" style="left:1088px">4096</span><span class="c" style="left:1180px">SHA256</span><span class="c" style="left:1350.5px;letter-spacing:.7px">NA</span><svg class="a1" viewBox="0 0 21 15"><rect x="1" y="1" width="16.4" height="10" fill="none" stroke="#d3d3d3" stroke-width="1.3"/><circle cx="5" cy="4.6" r="1.7" fill="#d3d3d3"/><path d="M4 5.8L3.6 8.6L5 7.8L6.4 8.6L6 5.8Z" fill="#d3d3d3"/><path d="M8.6 3.8H14.6M8.6 6H12.6" stroke="#d3d3d3" stroke-width="1.1"/><circle cx="18.2" cy="8.2" r="1.9" fill="#d3d3d3"/><path d="M17.4 9.2L13.4 13.8" stroke="#d3d3d3" stroke-width="1.6" stroke-linecap="round"/></svg><svg class="a2" viewBox="0 0 21 20"><circle cx="8.2" cy="8" r="7.2" fill="none" stroke="#000" stroke-width="1.3"/><path d="M4 3.6C6 3 8.4 3.2 10.8 4.4L10 6.4L11.6 7.2L8.2 9.2L5.6 6.4Z" fill="#000"/><rect x="4.8" y="9.8" width="12" height="7" fill="#fff" stroke="#000" stroke-width="1.3"/><rect x="7.4" y="12.2" width="12.6" height="7" fill="#fff" stroke="#000" stroke-width="1.5"/><path d="M9.4 15H10.6" stroke="#000" stroke-width="1.3"/><path d="M11.6 14.6H18" stroke="#888" stroke-width="1.6"/></svg><svg class="a3" viewBox="0 0 24 18"><rect x="1.6" y="5" width="17.6" height="11.4" rx="1" fill="#fff" stroke="#000" stroke-width="1.8"/><circle cx="6.3" cy="9.3" r="1.9" fill="#000"/><path d="M5.2 10.4L4.2 14L6.3 12.8L8.4 14L7.4 10.4Z" fill="#000"/><path d="M10.4 9.6H16.6M10.4 11.8H16.6M10.4 13.9H16.6" stroke="#555" stroke-width="1"/><path d="M11.2 4.3L16 0V2.4C20.8 2.4 23.8 6 23.4 13.4C22.2 8.8 20.4 6.4 16 6.4V8.8Z" fill="#000" stroke="#fff" stroke-width=".7"/></svg></div>
<div class="row" style="top:445px"><i class="cb" style="left:20px;top:12px"></i><svg class="ci" viewBox="0 0 18 12"><rect x=".6" y=".6" width="16.8" height="10.4" fill="#fff" stroke="#8d8378" stroke-width="1.2"/><path d="M2.6 3.4H8M2.6 5.9H7M2.6 8.4H8" stroke="#6f6a66" stroke-width="1"/><circle cx="12.6" cy="4.7" r="2.2" fill="#7a6a5c"/><path d="M11.5 6.2L11 9.4L12.6 8.6L14.2 9.4L13.7 6.2Z" fill="#7a6a5c"/></svg><i class="dot"></i><a style="letter-spacing:0.09px">asdasdas.com</a><span class="c" style="left:349px;letter-spacing:-.15px">kmp-w12r2-1</span><span class="c" style="left:612.5px;letter-spacing:-.08px">KMP-W12R2-1-CA</span><span class="c" style="left:877px;letter-spacing:.2px;word-spacing:1px">Apr 6, 2020 1...</span><span class="c" style="left:1008px">34</span><span class="c" style="left:1088px">2048</span><span class="c" style="left:1180px">SHA256</span><span class="c" style="left:1350.5px;letter-spacing:.7px">NA</span><svg class="a1" viewBox="0 0 21 15"><rect x="1" y="1" width="16.4" height="10" fill="none" stroke="#d3d3d3" stroke-width="1.3"/><circle cx="5" cy="4.6" r="1.7" fill="#d3d3d3"/><path d="M4 5.8L3.6 8.6L5 7.8L6.4 8.6L6 5.8Z" fill="#d3d3d3"/><path d="M8.6 3.8H14.6M8.6 6H12.6" stroke="#d3d3d3" stroke-width="1.1"/><circle cx="18.2" cy="8.2" r="1.9" fill="#d3d3d3"/><path d="M17.4 9.2L13.4 13.8" stroke="#d3d3d3" stroke-width="1.6" stroke-linecap="round"/></svg><svg class="a2" viewBox="0 0 21 20"><circle cx="8.2" cy="8" r="7.2" fill="none" stroke="#000" stroke-width="1.3"/><path d="M4 3.6C6 3 8.4 3.2 10.8 4.4L10 6.4L11.6 7.2L8.2 9.2L5.6 6.4Z" fill="#000"/><rect x="4.8" y="9.8" width="12" height="7" fill="#fff" stroke="#000" stroke-width="1.3"/><rect x="7.4" y="12.2" width="12.6" height="7" fill="#fff" stroke="#000" stroke-width="1.5"/><path d="M9.4 15H10.6" stroke="#000" stroke-width="1.3"/><path d="M11.6 14.6H18" stroke="#888" stroke-width="1.6"/></svg><svg class="a3" viewBox="0 0 24 18"><rect x="1.6" y="5" width="17.6" height="11.4" rx="1" fill="#fff" stroke="#000" stroke-width="1.8"/><circle cx="6.3" cy="9.3" r="1.9" fill="#000"/><path d="M5.2 10.4L4.2 14L6.3 12.8L8.4 14L7.4 10.4Z" fill="#000"/><path d="M10.4 9.6H16.6M10.4 11.8H16.6M10.4 13.9H16.6" stroke="#555" stroke-width="1"/><path d="M11.2 4.3L16 0V2.4C20.8 2.4 23.8 6 23.4 13.4C22.2 8.8 20.4 6.4 16 6.4V8.8Z" fill="#000" stroke="#fff" stroke-width=".7"/></svg></div>
<div class="row" style="top:491px"><i class="cb" style="left:20px;top:12px"></i><svg class="ci" viewBox="0 0 18 12"><rect x=".6" y=".6" width="16.8" height="10.4" fill="#fff" stroke="#8d8378" stroke-width="1.2"/><path d="M2.6 3.4H8M2.6 5.9H7M2.6 8.4H8" stroke="#6f6a66" stroke-width="1"/><circle cx="12.6" cy="4.7" r="2.2" fill="#7a6a5c"/><path d="M11.5 6.2L11 9.4L12.6 8.6L14.2 9.4L13.7 6.2Z" fill="#7a6a5c"/></svg><i class="dot"></i><a style="letter-spacing:0.13px">MEOD-W732-1.kmp.com</a><span class="c" style="left:349px;letter-spacing:-.15px">kmp-w12r2-1</span><span class="c" style="left:612.5px;letter-spacing:-.08px">KMP-W12R2-1-CA</span><span class="c" style="left:877px;letter-spacing:.2px;word-spacing:1px">Apr 6, 2020 1...</span><span class="c" style="left:1008px">34</span><span class="c" style="left:1088px">2048</span><span class="c" style="left:1180px">SHA256</span><span class="c" style="left:1350.5px;letter-spacing:.7px">NA</span><svg class="a1" viewBox="0 0 21 15"><rect x="1" y="1" width="16.4" height="10" fill="none" stroke="#d3d3d3" stroke-width="1.3"/><circle cx="5" cy="4.6" r="1.7" fill="#d3d3d3"/><path d="M4 5.8L3.6 8.6L5 7.8L6.4 8.6L6 5.8Z" fill="#d3d3d3"/><path d="M8.6 3.8H14.6M8.6 6H12.6" stroke="#d3d3d3" stroke-width="1.1"/><circle cx="18.2" cy="8.2" r="1.9" fill="#d3d3d3"/><path d="M17.4 9.2L13.4 13.8" stroke="#d3d3d3" stroke-width="1.6" stroke-linecap="round"/></svg><svg class="a2" viewBox="0 0 21 20"><circle cx="8.2" cy="8" r="7.2" fill="none" stroke="#d0d0d0" stroke-width="1.3"/><path d="M4 3.6C6 3 8.4 3.2 10.8 4.4L10 6.4L11.6 7.2L8.2 9.2L5.6 6.4Z" fill="#d0d0d0"/><rect x="4.8" y="9.8" width="12" height="7" fill="#fff" stroke="#d0d0d0" stroke-width="1.3"/><rect x="7.4" y="12.2" width="12.6" height="7" fill="#fff" stroke="#d0d0d0" stroke-width="1.5"/><path d="M9.4 15H10.6" stroke="#d0d0d0" stroke-width="1.3"/><path d="M11.6 14.6H18" stroke="#e4e4e4" stroke-width="1.6"/></svg><svg class="a3" viewBox="0 0 24 18"><rect x="1.6" y="5" width="17.6" height="11.4" rx="1" fill="#fff" stroke="#000" stroke-width="1.8"/><circle cx="6.3" cy="9.3" r="1.9" fill="#000"/><path d="M5.2 10.4L4.2 14L6.3 12.8L8.4 14L7.4 10.4Z" fill="#000"/><path d="M10.4 9.6H16.6M10.4 11.8H16.6M10.4 13.9H16.6" stroke="#555" stroke-width="1"/><path d="M11.2 4.3L16 0V2.4C20.8 2.4 23.8 6 23.4 13.4C22.2 8.8 20.4 6.4 16 6.4V8.8Z" fill="#000" stroke="#fff" stroke-width=".7"/></svg></div>
<div class="row" style="top:537px"><i class="cb" style="left:20px;top:12px"></i><svg class="ci" viewBox="0 0 18 12"><rect x=".6" y=".6" width="16.8" height="10.4" fill="#fff" stroke="#8d8378" stroke-width="1.2"/><path d="M2.6 3.4H8M2.6 5.9H7M2.6 8.4H8" stroke="#6f6a66" stroke-width="1"/><circle cx="12.6" cy="4.7" r="2.2" fill="#7a6a5c"/><path d="M11.5 6.2L11 9.4L12.6 8.6L14.2 9.4L13.7 6.2Z" fill="#7a6a5c"/></svg><i class="dot"></i><a style="letter-spacing:0.15px">AZJSYHV1TDDR.ilo.aztecgrou...</a><span class="c" style="left:349px;letter-spacing:-.15px">kmp-w12r2-1</span><span class="c" style="left:612.5px;letter-spacing:-.08px">KMP-W12R2-1-CA</span><span class="c" style="left:877px;letter-spacing:.2px;word-spacing:1px">Apr 6, 2020 1...</span><span class="c" style="left:1008px">34</span><span class="c" style="left:1088px">2048</span><span class="c" style="left:1180px">SHA256</span><span class="c" style="left:1350.5px;letter-spacing:.7px">NA</span><svg class="a1" viewBox="0 0 21 15"><rect x="1" y="1" width="16.4" height="10" fill="none" stroke="#d3d3d3" stroke-width="1.3"/><circle cx="5" cy="4.6" r="1.7" fill="#d3d3d3"/><path d="M4 5.8L3.6 8.6L5 7.8L6.4 8.6L6 5.8Z" fill="#d3d3d3"/><path d="M8.6 3.8H14.6M8.6 6H12.6" stroke="#d3d3d3" stroke-width="1.1"/><circle cx="18.2" cy="8.2" r="1.9" fill="#d3d3d3"/><path d="M17.4 9.2L13.4 13.8" stroke="#d3d3d3" stroke-width="1.6" stroke-linecap="round"/></svg><svg class="a2" viewBox="0 0 21 20"><circle cx="8.2" cy="8" r="7.2" fill="none" stroke="#d0d0d0" stroke-width="1.3"/><path d="M4 3.6C6 3 8.4 3.2 10.8 4.4L10 6.4L11.6 7.2L8.2 9.2L5.6 6.4Z" fill="#d0d0d0"/><rect x="4.8" y="9.8" width="12" height="7" fill="#fff" stroke="#d0d0d0" stroke-width="1.3"/><rect x="7.4" y="12.2" width="12.6" height="7" fill="#fff" stroke="#d0d0d0" stroke-width="1.5"/><path d="M9.4 15H10.6" stroke="#d0d0d0" stroke-width="1.3"/><path d="M11.6 14.6H18" stroke="#e4e4e4" stroke-width="1.6"/></svg><svg class="a3" viewBox="0 0 24 18"><rect x="1.6" y="5" width="17.6" height="11.4" rx="1" fill="#fff" stroke="#000" stroke-width="1.8"/><circle cx="6.3" cy="9.3" r="1.9" fill="#000"/><path d="M5.2 10.4L4.2 14L6.3 12.8L8.4 14L7.4 10.4Z" fill="#000"/><path d="M10.4 9.6H16.6M10.4 11.8H16.6M10.4 13.9H16.6" stroke="#555" stroke-width="1"/><path d="M11.2 4.3L16 0V2.4C20.8 2.4 23.8 6 23.4 13.4C22.2 8.8 20.4 6.4 16 6.4V8.8Z" fill="#000" stroke="#fff" stroke-width=".7"/></svg></div>
<div id="th"><i class="cb" style="left:17px;top:17px"></i><span class="h" style="left:83px">Common Name</span><span class="h" style="left:348px;letter-spacing:.3px">DNS Name</span><span class="h" style="left:612px">Issuer</span><span class="h" style="left:877px">Valid To</span><span class="h" style="left:1087px">Key Size</span><span class="h" style="right:453px;letter-spacing:.55px">Signature Algorithm</span><span class="h" style="left:1349.6px">Domain Expiration</span><span class="h" style="left:1520.6px">Description</span><svg style="position:absolute;left:1757px;top:12.5px;width:20px;height:20px" viewBox="0 0 22 22"><circle cx="9" cy="9" r="6.6" fill="none" stroke="#111" stroke-width="2.6"/><path d="M13.8 13.8L20 20" stroke="#111" stroke-width="3.4" stroke-linecap="round"/></svg></div>
</div>
<div id="ftr">
 <svg style="position:absolute;left:730.6px;top:21px;width:16px;height:16px" viewBox="0 0 16 16"><path d="M7.6 0.6L1 8L7.6 15.4V0.6ZM15 0.6L8.4 8L15 15.4Z" fill="#bdbdbd"/></svg>
 <svg style="position:absolute;left:752.6px;top:21px;width:13px;height:16px" viewBox="0 0 13 16"><path d="M9 0.6L12 3.4L7 8L12 12.6L9 15.4L1 8Z" fill="#bdbdbd"/></svg>
 <i style="position:absolute;left:773px;top:17px;width:1px;height:22px;background:#e0e0e0"></i>
 <div class="abs" style="left:780.5px;top:18px;font-size:17px;line-height:20px;color:#555;letter-spacing:-.55px">Page</div>
 <div style="position:absolute;left:823px;top:14px;width:67px;height:29px;border:1px solid #ccc;border-radius:4px;background:#fff"><span style="position:absolute;left:7px;top:4px;font-size:17px;line-height:20px;color:#555">1</span></div>
 <div class="abs" style="left:896px;top:18px;font-size:17px;line-height:20px;color:#555;letter-spacing:-.3px">of 17</div>
 <i style="position:absolute;left:937px;top:17px;width:1px;height:22px;background:#e0e0e0"></i>
 <svg style="position:absolute;left:947px;top:21px;width:14px;height:16px" viewBox="0 0 14 16"><path d="M4 0.6L1 3.4L6.4 8L1 12.6L4 15.4L13 8Z" fill="#4a4a4a"/></svg>
 <svg style="position:absolute;left:966px;top:21px;width:16px;height:16px" viewBox="0 0 16 16"><path d="M0.6 0.6L7.6 8L0.6 15.4ZM8.2 0.6L15.4 8L8.2 15.4Z" fill="#4a4a4a"/></svg>
 <div style="position:absolute;left:987px;top:12px;width:78px;height:30px;border:1px solid #ccc;border-radius:4px;background:#fff"><span style="position:absolute;left:10px;top:5px;font-size:17px;line-height:20px;color:#555">25</span><i style="position:absolute;left:59px;top:9.5px;border:4.5px solid transparent;border-top:7px solid #444;border-bottom:none"></i></div>
 <div class="abs" style="right:24px;top:18.4px;font-size:17px;line-height:20px;color:#555;letter-spacing:-.14px">Showing 1 - 25 of 416</div>
</div>

</div>
<div id="modal">
 <div id="mhdr"></div>
 <div class="abs" style="left:18px;top:19px;font-size:21px;line-height:26px;color:#333;letter-spacing:.47px">Certificate Deployment - MSStore</div>
 <svg style="position:absolute;left:808px;top:24px;width:13px;height:13px" viewBox="0 0 13 13"><path d="M1.2 1.2L11.8 11.8M11.8 1.2L1.2 11.8" stroke="#bdbdbd" stroke-width="1.6"/></svg>
 <svg style="position:absolute;left:792px;top:88px;width:20px;height:20px" viewBox="0 0 20 20"><circle cx="10" cy="10.4" r="8.1" fill="#fff" stroke="#1b9a1b" stroke-width="1.5"/><text x="10" y="14.2" text-anchor="middle" font-family="Liberation Sans,Arial,sans-serif" font-weight="bold" font-size="10.5" fill="#1b9a1b">?</text></svg>
 <div class="lbl" style="left:13px;top:102px">Deployment Type :</div>
 <i class="radio" style="left:239px;top:103px"><b></b></i>
 <div class="abs opt" style="left:266.5px;top:103px;letter-spacing:.1px">Single</div>
 <i class="radio" style="left:331px;top:103px"></i>
 <div class="abs opt" style="left:358px;top:103px">Multiple (Servers)</div>
 <i class="radio" style="left:509px;top:103px"></i>
 <div class="abs opt" style="left:536px;top:103px">Agent</div>
 <div class="lbl" style="left:13px;top:164px;letter-spacing:.3px">Server Name :</div>
 <div class="inp" style="top:159px"></div>
 <i class="cb chk" style="left:231px;top:231px"><svg viewBox="0 0 13 13" style="position:absolute;left:-1px;top:-1px;width:13px;height:13px"><path d="M2.8 6.6L5.4 9.2L10.6 2.8" fill="none" stroke="#222" stroke-width="2.1"/></svg></i>
 <div class="abs" id="usek" style="left:252px;top:231px;font-size:16px;line-height:20px;color:#333;letter-spacing:.44px">Use Key Manager Plus service account credentials for authentication</div>
 <div class="lbl" style="left:13px;top:292px">Path :</div>
 <div class="inp" style="top:287px"><span style="position:absolute;left:10px;top:5px;font-size:16.7px;line-height:20px;color:#939393;white-space:nowrap">example C:\mycert</span></div>
 <div class="mb" style="left:225px;width:83px">Deploy</div>
 <div class="mb" style="left:314px;width:69px">Save</div>
 <div class="mb" style="left:400px;width:84px;background:#fff;border:1px solid #ccc;color:#333;line-height:40px;-webkit-text-stroke:0">Cancel</div>
</div>

</body></html>
